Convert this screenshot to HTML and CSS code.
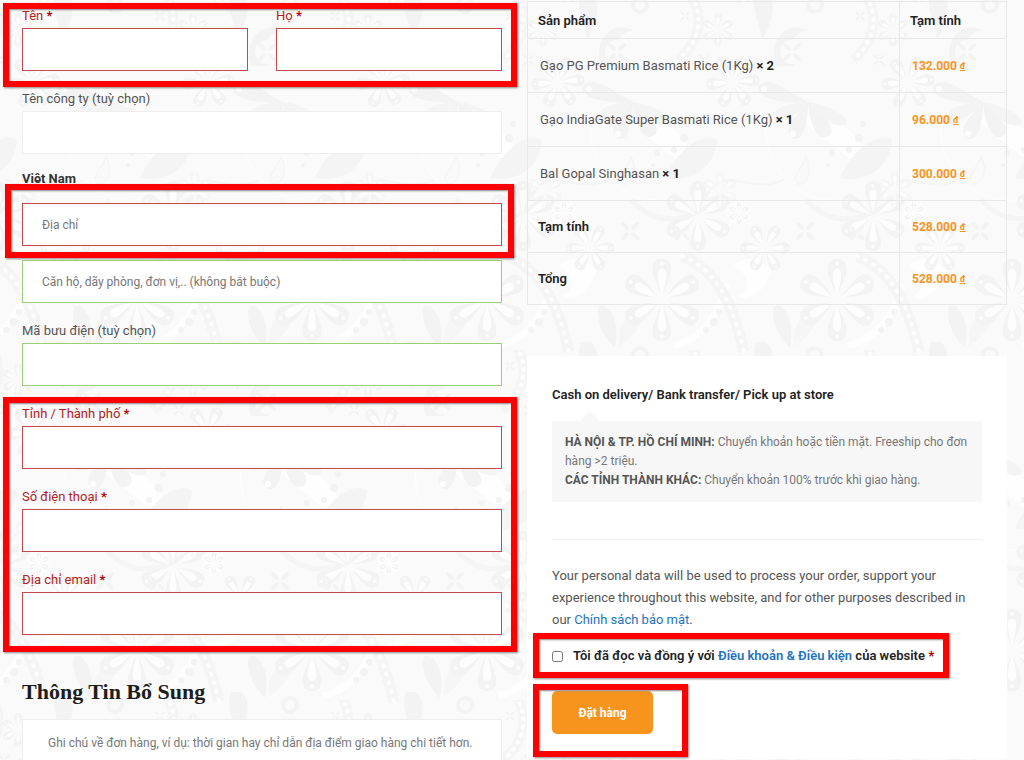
FILE: index.html
```html
<!DOCTYPE html>
<html lang="vi">
<head>
    <meta charset="UTF-8">
    <meta name="viewport" content="width=device-width, initial-scale=1.0">
    <title>Thanh toán</title>
    <link rel="stylesheet" href="styles.css">
</head>
<body>
    <!-- floral background -->
    <svg class="backdrop" aria-hidden="true">
        <defs>
            <g id="petal">
                <path d="M0 -5 C-5 -14 -11 -27 -9 -35 C-7 -43 7 -43 9 -35 C11 -27 5 -14 0 -5Z" fill="#f0f0f0"/>
                <path d="M0 -3 C-2 -12 -5 -22 -4 -28 C-3 -32 3 -32 4 -28 C5 -22 2 -12 0 -3Z" fill="#fefefe"/>
                <circle cy="-36" r="2" fill="#fdfdfd"/>
            </g>
            <g id="flower">
                <use href="#petal"/>
                <use href="#petal" transform="rotate(60)"/>
                <use href="#petal" transform="rotate(120)"/>
                <use href="#petal" transform="rotate(180)"/>
                <use href="#petal" transform="rotate(240)"/>
                <use href="#petal" transform="rotate(300)"/>
            </g>
            <g id="spark" fill="#f0f0f0">
                <ellipse cx="5" cy="5" rx="5" ry="2" transform="rotate(45 5 5)"/>
                <ellipse cx="-5" cy="5" rx="5" ry="2" transform="rotate(-45 -5 5)"/>
                <ellipse cx="5" cy="-5" rx="5" ry="2" transform="rotate(-45 5 -5)"/>
                <ellipse cx="-5" cy="-5" rx="5" ry="2" transform="rotate(45 -5 -5)"/>
            </g>
            <g id="motif">
                <!-- swirls and bands -->
                <path d="M100 118 C138 108 172 140 166 176 C158 160 132 148 100 118Z" fill="#fff"/>
                <path d="M66 110 C60 160 90 204 140 200" fill="none" stroke="#fff"/>
                <path d="M-14 -10 C8 14 -2 44 -22 60" fill="none" stroke="#f3f3f3" stroke-width="10"/>
                <path d="M-14 -10 C8 14 -2 44 -22 60" fill="none" stroke="#fff" stroke-width="4" stroke-dasharray="1 7" stroke-linecap="round"/>
                <path d="M-18 256 C14 268 32 300 44 352" fill="none" stroke="#f2f2f2" stroke-width="11"/>
                <path d="M-18 256 C14 268 32 300 44 352" fill="none" stroke="#fff" stroke-width="4" stroke-dasharray="1 8" stroke-linecap="round"/>
                <path d="M34 266 C46 252 62 262 72 270 C66 290 50 302 38 296 C52 288 50 276 34 266Z" fill="#fff"/>
                <path d="M148 346 C180 338 196 310 202 284" fill="none" stroke="#fff" stroke-width="7"/>
                <path d="M106 200 C130 226 158 222 184 206" fill="none" stroke="#f2f2f2" stroke-width="5"/>
                <path d="M4 200 C24 160 48 196 84 180" fill="none" stroke="#f2f2f2" stroke-width="2"/>
                <!-- leaves -->
                <path d="M56 -8 C50 8 60 22 62 40 C72 22 78 2 66 -8Z" fill="#f0f0f0"/>
                <path d="M76 66 C68 40 86 20 108 30 C92 34 86 44 94 66Z" fill="#f0f0f0"/>
                <path d="M140 178 C152 150 176 132 192 140 C190 166 168 184 140 178Z" fill="#f1f1f1"/>
                <path d="M74 306 C70 322 80 338 90 348 C94 328 90 314 80 306Z" fill="#efefef"/>
                <path d="M94 346 C92 324 102 312 124 306 C118 324 108 338 94 346Z" fill="#f4f4f4"/>
                <!-- butterfly bloom -->
                <path d="M108 102 C90 92 68 74 58 86 C54 100 88 104 108 102Z" fill="#f0f0f0"/>
                <path d="M108 102 C92 102 68 108 74 120 C84 124 98 114 108 102Z" fill="#f1f1f1"/>
                <path d="M108 102 C94 118 82 130 92 138 C104 144 108 120 108 102Z" fill="#f0f0f0"/>
                <path d="M108 102 C110 122 116 142 128 136 C138 130 126 118 108 102Z" fill="#f0f0f0"/>
                <path d="M108 102 C126 104 150 116 146 124 C136 130 118 116 108 102Z" fill="#f1f1f1"/>
                <circle cx="64" cy="89" r="3" fill="#fff"/>
                <circle cx="93" cy="134" r="3" fill="#fff"/>
                <path d="M106 156 C114 172 106 186 98 184 C90 176 102 170 106 156Z" fill="#f8f8f8" stroke="#efefef"/>
                <!-- blooms -->
                <use href="#flower" transform="translate(137 300)"/>
                <use href="#flower" transform="translate(33 82) scale(.65) rotate(25)"/>
                <use href="#flower" transform="translate(173 216) scale(.85)"/>
                <use href="#flower" transform="translate(20 190) scale(.45)" opacity=".6"/>
                <use href="#flower" transform="translate(65 248) scale(.6) rotate(30)"/>
                <use href="#flower" transform="translate(18 30) scale(.4)"/>
                <circle cx="39" cy="213" r="12" fill="#fff" stroke="#fbfbfb" stroke-width="4" stroke-dasharray="4 2"/>
                <use href="#flower" transform="translate(39 213) scale(.25)"/>
                <circle cx="115" cy="5" r="7" fill="none" stroke="#f0f0f0" stroke-width="4"/>
                <circle cx="92" cy="52" r="12" fill="#fafafa"/>
                <use href="#spark" transform="translate(92 52)"/>
                <use href="#spark" transform="translate(105 231)"/>
                <use href="#spark" transform="translate(157 233) scale(.8)"/>
                <use href="#spark" transform="translate(160 16) scale(.5)"/>
                <use href="#spark" transform="translate(4 60) scale(.6)"/>
                <g fill="#efefef">
                    <circle cx="132" cy="153" r="3"/>
                    <circle cx="159" cy="138" r="4"/>
                    <circle cx="163" cy="124" r="3"/>
                    <circle cx="149" cy="150" r="3"/>
                    <circle cx="128" cy="165" r="2"/>
                    <circle cx="181" cy="330" r="3"/>
                    <circle cx="189" cy="322" r="4"/>
                    <circle cx="194" cy="312" r="3"/>
                </g>
            </g>
            <pattern id="paisley" width="175" height="350" patternUnits="userSpaceOnUse">
                <rect width="175" height="350" fill="#fafafa"/>
                <g opacity=".7">
                    <use href="#motif" x="-175"/>
                    <use href="#motif" x="175"/>
                    <use href="#motif" y="-350"/>
                    <use href="#motif" y="350"/>
                    <use href="#motif"/>
                </g>
            </pattern>
        </defs>
        <rect width="100%" height="100%" fill="url(#paisley)"/>
    </svg>

    <form class="checkout">
        <section class="billing">
            <div class="name-row marked marked-name">
                <div class="field invalid">
                    <label for="first-name">Tên <b>*</b></label>
                    <input type="text" id="first-name">
                </div>
                <div class="field invalid">
                    <label for="last-name">Họ <b>*</b></label>
                    <input type="text" id="last-name">
                </div>
            </div>
            <div class="field">
                <label for="company">Tên công ty (tuỳ chọn)</label>
                <input type="text" id="company">
            </div>
            <strong class="country">Việt Nam</strong>
            <div class="field invalid marked marked-address">
                <input type="text" id="address" placeholder="Địa chỉ" aria-label="Địa chỉ">
            </div>
            <div class="field valid">
                <input type="text" id="address-2" placeholder="Căn hộ, dãy phòng, đơn vị,.. (không bắt buộc)" aria-label="Căn hộ">
            </div>
            <div class="field valid">
                <label for="postcode">Mã bưu điện (tuỳ chọn)</label>
                <input type="text" id="postcode">
            </div>
            <div class="marked marked-contact">
                <div class="field invalid">
                    <label for="city">Tỉnh / Thành phố <b>*</b></label>
                    <input type="text" id="city">
                </div>
                <div class="field invalid">
                    <label for="phone">Số điện thoại <b>*</b></label>
                    <input type="tel" id="phone">
                </div>
                <div class="field invalid">
                    <label for="email">Địa chỉ email <b>*</b></label>
                    <input type="email" id="email">
                </div>
            </div>
            <h3>Thông Tin Bổ Sung</h3>
            <textarea id="notes" aria-label="Ghi chú" placeholder="Ghi chú về đơn hàng, ví dụ: thời gian hay chỉ dẫn địa điểm giao hàng chi tiết hơn."></textarea>
        </section>

        <section class="order">
            <table>
                <thead>
                    <tr><th>Sản phẩm</th><th class="total">Tạm tính</th></tr>
                </thead>
                <tbody>
                    <tr class="item"><td>Gạo PG Premium Basmati Rice (1Kg) <strong>× 2</strong></td><td class="price">132.000 <u>đ</u></td></tr>
                    <tr class="item"><td>Gạo IndiaGate Super Basmati Rice (1Kg) <strong>× 1</strong></td><td class="price">96.000 <u>đ</u></td></tr>
                    <tr class="item"><td>Bal Gopal Singhasan <strong>× 1</strong></td><td class="price">300.000 <u>đ</u></td></tr>
                </tbody>
                <tfoot>
                    <tr><th>Tạm tính</th><td class="price">528.000 <u>đ</u></td></tr>
                    <tr><th>Tổng</th><td class="price">528.000 <u>đ</u></td></tr>
                </tfoot>
            </table>

            <div class="payment">
                <h4>Cash on delivery/ Bank transfer/ Pick up at store</h4>
                <div class="payment-box">
                    <strong>HÀ NỘI &amp; TP. HỒ CHÍ MINH:</strong> Chuyển khoản hoặc tiền mặt. Freeship cho đơn hàng &gt;2 triệu.<br>
                    <strong>CÁC TỈNH THÀNH KHÁC:</strong> Chuyển khoản 100% trước khi giao hàng.
                </div>
                <hr>
                <p class="privacy">Your personal data will be used to process your order, support your experience throughout this website, and for other purposes described in our <a href="#">Chính sách bảo mật</a>.</p>
                <div class="terms marked marked-terms">
                    <input type="checkbox" id="terms">
                    <label for="terms">Tôi đã đọc và đồng ý với <a href="#">Điều khoản &amp; Điều kiện</a> của website <b>*</b></label>
                </div>
                <div class="submit marked marked-submit">
                    <button type="submit">Đặt hàng</button>
                </div>
            </div>
        </section>
    </form>
</body>
</html>
```

FILE: styles.css
```css
* {
    box-sizing: border-box;
}
body {
    margin: 0;
    height: 100vh;
    overflow: hidden;
    font-family: Roboto, "Liberation Sans", sans-serif;
    font-size: 13px;
    color: #555;
    background: #fafafa;
}
a {
    color: #1e73be;
    text-decoration: none;
}
.backdrop {
    position: absolute;
    top: 0;
    left: 0;
    width: 100%;
    height: 100%;
    z-index: -1;
}
.checkout {
    display: grid;
    grid-template-columns: 1fr 1fr;
    gap: 25px;
    padding: 0 17px 0 22px;
}

/* billing */
.billing {
    padding-top: 6px;
}
.name-row {
    display: grid;
    grid-template-columns: 1fr 1fr;
    gap: 28px;
    margin-bottom: 18px;
}
.field {
    margin-bottom: 18px;
}
.name-row .field,
.marked-contact .field:last-child {
    margin-bottom: 0;
}
.field label {
    display: block;
    padding-bottom: 2px;
    line-height: 20px;
}
.field input {
    display: block;
    width: 100%;
    height: 43px;
    padding: 0 19px;
    border: 1px solid #eee;
    border-radius: 0;
    background: #fff;
    font: inherit;
    font-size: 12px;
    color: #555;
}
::placeholder {
    color: #777;
    opacity: 1;
}
.invalid label {
    color: #b22222;
}
.field.invalid input {
    border-color: #c4494c;
}
.field.valid input {
    border-color: #9ad07a;
}
b {
    color: #b00000;
}
.country {
    display: block;
    margin-bottom: 17px;
    line-height: 14px;
    color: #333;
}
.marked-address {
    margin-bottom: 14px;
}
h3 {
    margin: 42px 0 12px;
    font-family: "Liberation Serif", serif;
    font-size: 22px;
    line-height: 30px;
    color: #1d1d1d;
}
textarea {
    display: block;
    width: 100%;
    height: 120px;
    padding: 14px 25px;
    border: 1px solid #eee;
    background: #fff;
    font: inherit;
    font-size: 12px;
    line-height: 18px;
    resize: none;
}

/* frames laid over the parts that have to be filled in */
.marked {
    position: relative;
}
.marked::after {
    content: "";
    position: absolute;
    border: 6px solid #f00;
    box-shadow: 1px 1px 2px #888, inset 1px 1px 2px #888;
    pointer-events: none;
    z-index: 1;
}
.marked-name::after {
    inset: -3px -15px -16px -19px;
}
.marked-address::after {
    inset: -19px -12px -12px -17px;
}
.marked-contact::after {
    inset: -7px -15px -17px -19px;
}
.marked-terms::after {
    inset: -13px -15px -12px -19px;
}
.marked-submit::after {
    inset: -7px -35px -23px -19px;
}

/* order */
.order {
    padding-top: 1px;
}
table {
    width: 100%;
    border-collapse: collapse;
    border: 1px solid #e8e8e8;
}
th,
td {
    height: 52px;
    padding: 0 10px;
    border: 1px solid #e8e8e8;
    text-align: left;
}
th {
    font-weight: 600;
    color: #222;
}
td {
    padding: 0 12px;
}
thead th {
    height: 37px;
}
.item td {
    height: 54px;
}
.item strong {
    color: #222;
}
.total {
    width: 107px;
}
.price {
    font-size: 12px;
    font-weight: 700;
    color: #f7941d;
}
.price u {
    font-size: 9px;
    vertical-align: 1px;
}
.payment {
    margin-top: 51px;
    padding: 28px 25px 25px;
    background: #fff;
}
h4 {
    margin: 0 0 15px;
    font-size: 13px;
    font-weight: 600;
    line-height: 22px;
    color: #222;
}
.payment-box {
    position: relative;
    padding: 12px 13px;
    background: #f7f7f7;
    font-size: 12px;
    line-height: 19px;
    color: #777;
}
.payment-box::before {
    content: "";
    position: absolute;
    top: -10px;
    left: 28px;
    border: 10px solid transparent;
    border-top: 0;
    border-bottom-color: #f7f7f7;
}
.payment-box strong {
    color: #555;
}
hr {
    margin: 37px 0 25px;
    border: 0;
    border-top: 1px solid #eee;
}
.privacy {
    margin: 0 0 15px;
    line-height: 22px;
}
.terms {
    display: flex;
    align-items: center;
    gap: 10px;
    width: fit-content;
    margin-bottom: 25px;
    font-weight: 600;
    line-height: 20px;
    color: #222;
}
.terms input {
    width: 11px;
    height: 11px;
    margin: 0;
}
.submit {
    width: fit-content;
}
button {
    display: block;
    width: 101px;
    height: 43px;
    border: 0;
    border-radius: 5px;
    background: #f7941d;
    font: inherit;
    font-size: 12px;
    font-weight: 700;
    color: #fff;
    cursor: pointer;
}
```
